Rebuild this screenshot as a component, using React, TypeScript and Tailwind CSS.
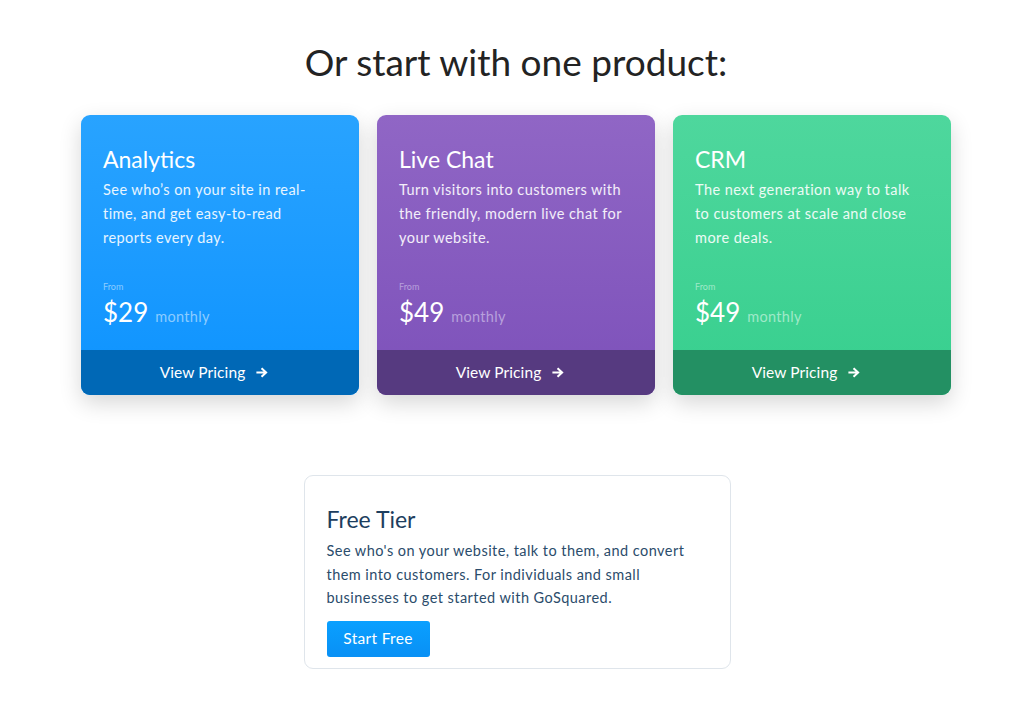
type Product = {
    name: string;
    blurb: string;
    price: string;
    body: string;
    foot: string;
    muted: string;
};

const PRODUCTS: Product[] = [
    {
        name: "Analytics",
        blurb: "See who’s on your site in real-time, and get easy-to-read reports every day.",
        price: "$29",
        body: "bg-gradient-to-b from-[#28a3ff] to-[#0b93ff]",
        foot: "bg-[#0068b6]",
        muted: "text-[#8cccff]",
    },
    {
        name: "Live Chat",
        blurb: "Turn visitors into customers with the friendly, modern live chat for your website.",
        price: "$49",
        body: "bg-gradient-to-b from-[#9066c5] to-[#7d51ba]",
        foot: "bg-[#563a80]",
        muted: "text-[#b8a0dc]",
    },
    {
        name: "CRM",
        blurb: "The next generation way to talk to customers at scale and close more deals.",
        price: "$49",
        body: "bg-gradient-to-b from-[#4ed79d] to-[#36cf8e]",
        foot: "bg-[#239063]",
        muted: "text-[#9fe9c8]",
    },
];

function Arrow() {
    return (
        <svg width="12" height="11" viewBox="0 0 12 11" fill="currentColor">
            <path d="M6.2 0.6 L11.6 5.5 L6.2 10.4 L4.8 9 L7.6 6.5 H0.4 V4.5 H7.6 L4.8 2 Z" />
        </svg>
    );
}

function ProductCard({ p }: { p: Product }) {
    return (
        <div className={`w-[278px] h-[280px] rounded-[9px] overflow-hidden flex flex-col text-white shadow-[0_8px_22px_rgba(0,0,0,0.16)] ${p.body}`}>
            <div className="flex-1 pl-[22px] pr-[28px] pt-[30px]">
                <h3 className="text-[23px] leading-[28px]">{p.name}</h3>
                <p className="mt-[5px] text-[14.5px] leading-[24px] tracking-[0.45px] text-white/90">{p.blurb}</p>
            </div>
            <div className="px-[22px] pb-[22px]">
                <p className={`text-[9px] leading-[12px] ${p.muted}`}>From</p>
                <p className="mt-[4px] flex items-baseline gap-[7px]">
                    <span className="text-[26px] leading-[30px]">{p.price}</span>
                    <span className={`text-[14.5px] tracking-[0.3px] ${p.muted}`}>monthly</span>
                </p>
            </div>
            <div className={`h-[45px] flex items-center justify-center gap-[11px] pr-[12px] text-[15.5px] tracking-[0.1px] ${p.foot}`}>
                <span>View Pricing</span>
                <Arrow />
            </div>
        </div>
    );
}

export default function App() {
    return (
        <div className="min-h-[715px] bg-white pl-[8px] pt-[40px] font-['Lato','Noto_Sans',sans-serif]">
            <h1 className="text-center text-[37px] leading-[44px] text-[#232323]">Or start with one product:</h1>

            <div className="mt-[31px] flex justify-center gap-[18px]">
                {PRODUCTS.map((p) => (
                    <ProductCard key={p.name} p={p} />
                ))}
            </div>

            <div className="mt-[80px] flex justify-center pl-[2px]">
                <div className="w-[427px] h-[194px] rounded-[9px] border border-[#dfe5eb] px-[22px] pt-[29px]">
                    <h2 className="text-[23px] leading-[28px] text-[#1d3e5e]">Free Tier</h2>
                    <p className="mt-[6px] text-[14.5px] leading-[23.5px] tracking-[0.45px] text-[#2b4c6b]">
                        See who's on your website, talk to them, and convert them into customers. For individuals and small businesses to get started with GoSquared.
                    </p>
                    <button className="mt-[11px] h-[36px] w-[103px] rounded-[3px] bg-gradient-to-b from-[#0aa0ff] to-[#0990f5] text-[15.5px] tracking-[0.3px] text-white">
                        Start Free
                    </button>
                </div>
            </div>
        </div>
    );
}
